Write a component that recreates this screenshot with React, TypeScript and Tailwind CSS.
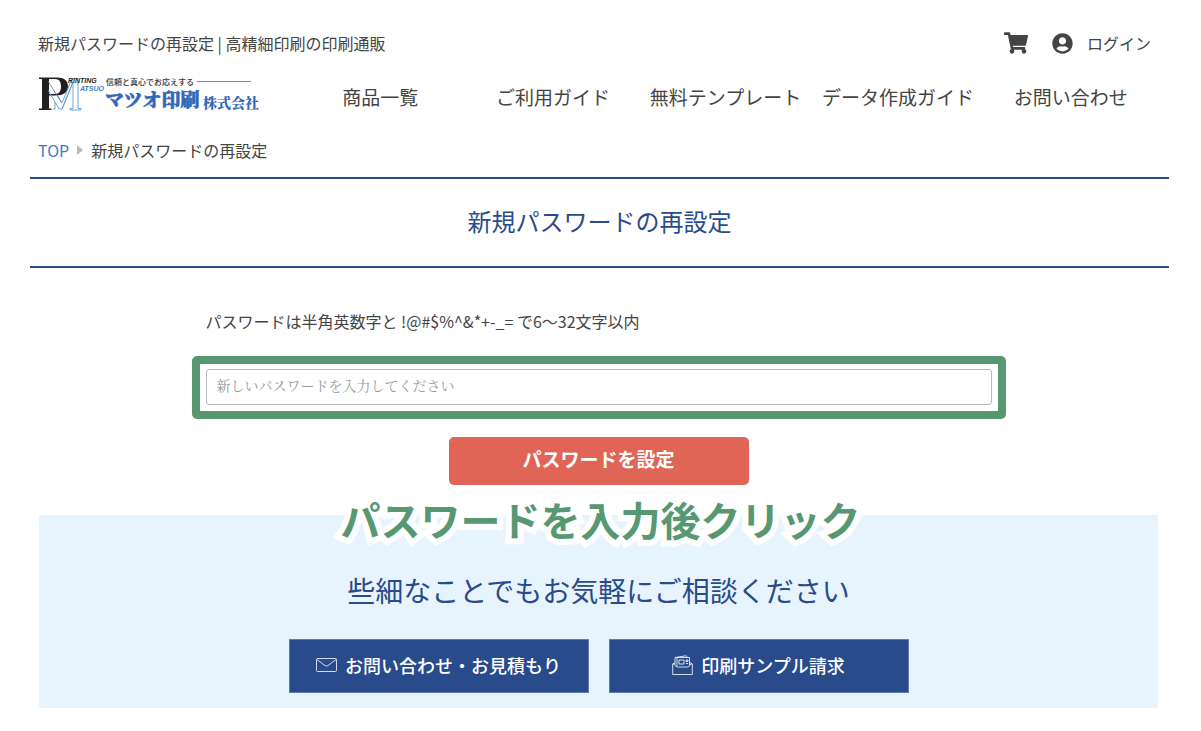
import type { ReactNode } from "react";
import { FaShoppingCart, FaUserCircle } from "react-icons/fa";

const NAV_ITEMS = [
  "商品一覧",
  "ご利用ガイド",
  "無料テンプレート",
  "データ作成ガイド",
  "お問い合わせ",
];

function Logo() {
  return (
    <svg viewBox="0 0 224 38" className="h-[38px] w-[224px]" role="img" aria-label="マツオ印刷株式会社">
      <path
        fill="#231f20"
        fillRule="evenodd"
        d="M1 4.500h18c7 0 11 3 11 9s-5 9-12 9h-7v13h2.500V37H1v-1.500h3V6H1zM11 6v15h6c4.500 0 6-3 6-7.500S21.500 6 17 6z"
      />
      <g fill="none" stroke="#5b9bd5" strokeWidth="0.9">
        <path d="M10 17 21 36h3L35 9v26.500h-3V37h11v-1.500h-3V5.500h-6L24 30 19.500 22.500" />
        <path d="M17 29v7h-2M35 9 24 36" />
      </g>
      <path d="M10 8 23 29" stroke="#777777" strokeWidth="0.8" />
      <g fontFamily="Liberation Sans, sans-serif" fontWeight="700" fontStyle="italic" fontSize="7">
        <text x="30" y="10" fill="#231f20">RINTING</text>
        <text x="42" y="18" fill="#3b7cc9">ATSUO</text>
      </g>
      <g fill="#3267b8" fontWeight="900" fontFamily="Noto Serif CJK JP, Noto Sans CJK JP, sans-serif">
        <text x="67" y="34" fontSize="19" stroke="#3267b8" strokeWidth="0.5">マツオ印刷</text>
        <text x="165" y="35" fontSize="14">株式会社</text>
      </g>
      <text x="68" y="12" fontSize="8" fontWeight="500" fill="#333333" fontFamily="Noto Sans CJK JP, sans-serif">
        信頼と真心でお応えする
      </text>
      <path d="M159 8.500h54" stroke="#777777" strokeWidth="0.9" />
    </svg>
  );
}

function MailIcon() {
  return (
    <svg viewBox="0 0 21 14" className="h-[14px] w-[21px]" fill="none" stroke="currentColor" strokeWidth="0.8" aria-hidden="true">
      <rect x="0.500" y="0.500" width="20" height="13" rx="1" />
      <path d="M1 1.500 9 7.600q1.500 1 3 0L20 1.500" />
    </svg>
  );
}

function SampleIcon() {
  return (
    <svg viewBox="0 0 21 21" className="h-[21px] w-[21px]" fill="none" stroke="currentColor" strokeWidth="0.8" aria-hidden="true">
      <path d="M3 7.500 0.700 9v10.500h19.600V9L18 7.500" />
      <path d="M0.700 9h1.800q1 3 3 3h10q2 0 3-3h1.800" />
      <path d="M3 9V2.500L14 0.800l1.500 1.200M5 11V2.500h12.500V10" />
      <path d="M7 5h5v4H7zM14 5h2v1.500h-2zM14 8.500h2" />
    </svg>
  );
}

function ContactLink({ icon, children }: { icon: ReactNode; children: ReactNode }) {
  return (
    <a
      href="#"
      className="flex h-[54px] w-[300px] items-center justify-center gap-2 border border-[#5f7bb0] bg-[#294b8b] pb-0.5 text-lg font-medium text-white"
    >
      {icon}
      <span>{children}</span>
    </a>
  );
}

export default function App() {
  return (
    <div className="bg-white pt-6 pr-8 pb-6 pl-[30px] font-['Noto_Sans_CJK_JP',sans-serif] text-base text-[#444444]">
      <header className="px-2">
        <div className="flex h-[38px] items-center justify-between pr-[10px]">
          <p>新規パスワードの再設定 | 高精細印刷の印刷通販</p>
          <div className="flex items-center">
            <a href="#" aria-label="カート" className="mr-6">
              <FaShoppingCart className="h-[22px] w-6" />
            </a>
            <a href="#" className="flex items-center gap-[14px]">
              <FaUserCircle className="size-[21px]" />
              <span>ログイン</span>
            </a>
          </div>
        </div>
        <div className="mt-[11px] flex items-center">
          <a href="#" className="shrink-0 self-start">
            <Logo />
          </a>
          <nav className="mr-1 ml-8 grid h-12 flex-1 grid-cols-5 items-center text-center text-[19px]">
            {NAV_ITEMS.map((item) => (
              <a key={item} href="#" className="whitespace-nowrap">
                {item}
              </a>
            ))}
          </nav>
        </div>
        <nav aria-label="パンくずリスト" className="mt-[17px] flex h-6 items-center">
          <a href="#" className="text-[#3f78c8]">TOP</a>
          <svg viewBox="0 0 6 10" className="mr-2 ml-2 h-[10px] w-[6px]" aria-hidden="true">
            <path d="M0 0 6 5 0 10z" fill="#bbbbbb" />
          </svg>
          <span>新規パスワードの再設定</span>
        </nav>
      </header>

      <main>
        <h1 className="mt-[15px] flex h-[91px] items-center justify-center border-y-2 border-[#294b8b] pb-1 text-2xl text-[#294b8b]">
          新規パスワードの再設定
        </h1>

        <div className="pr-0.5">
          <form className="mx-auto mt-[41px] max-w-[814px]" onSubmit={(e) => e.preventDefault()}>
            <label htmlFor="new-password" className="block px-[14px] leading-6">
              パスワードは半角英数字と !@#$%^&amp;*+-_= で6〜32文字以内
            </label>
            <div className="mt-[23px] rounded-[5px] border-8 border-[#579873] px-[6px] pt-[5px] pb-[6px]">
              <input
                id="new-password"
                type="password"
                placeholder="新しいパスワードを入力してください"
                className="block h-9 w-full rounded-[3px] border border-[#b4bac0] px-[10px] pb-1 font-['Noto_Serif_CJK_JP','Noto_Sans_CJK_JP',serif] text-sm placeholder:text-[#999999]"
              />
            </div>
            <button
              type="submit"
              className="mx-auto mt-[18px] block h-12 w-[300px] rounded-[5px] bg-[#e06557] pb-1 text-[19px] font-bold text-white"
            >
              パスワードを設定
            </button>
          </form>

          <section className="relative mx-[9px] mt-[30px] bg-[#e7f4fe] pt-[54px] pb-[15px]">
            <p className="absolute inset-x-0 -top-[26px] pl-1 text-center text-[40px] leading-[60px] font-bold whitespace-nowrap text-[#579873] [-webkit-text-stroke:12px_white] [paint-order:stroke_fill] [stroke-linejoin:round]">
              パスワードを入力後クリック
            </p>
            <h2 className="text-center text-[28px] leading-[42px] text-[#294b8b]">
              些細なことでもお気軽にご相談ください
            </h2>
            <div className="mt-7 flex flex-wrap justify-center gap-5">
              <ContactLink icon={<MailIcon />}>お問い合わせ・お見積もり</ContactLink>
              <ContactLink icon={<SampleIcon />}>印刷サンプル請求</ContactLink>
            </div>
          </section>
        </div>
      </main>
    </div>
  );
}
